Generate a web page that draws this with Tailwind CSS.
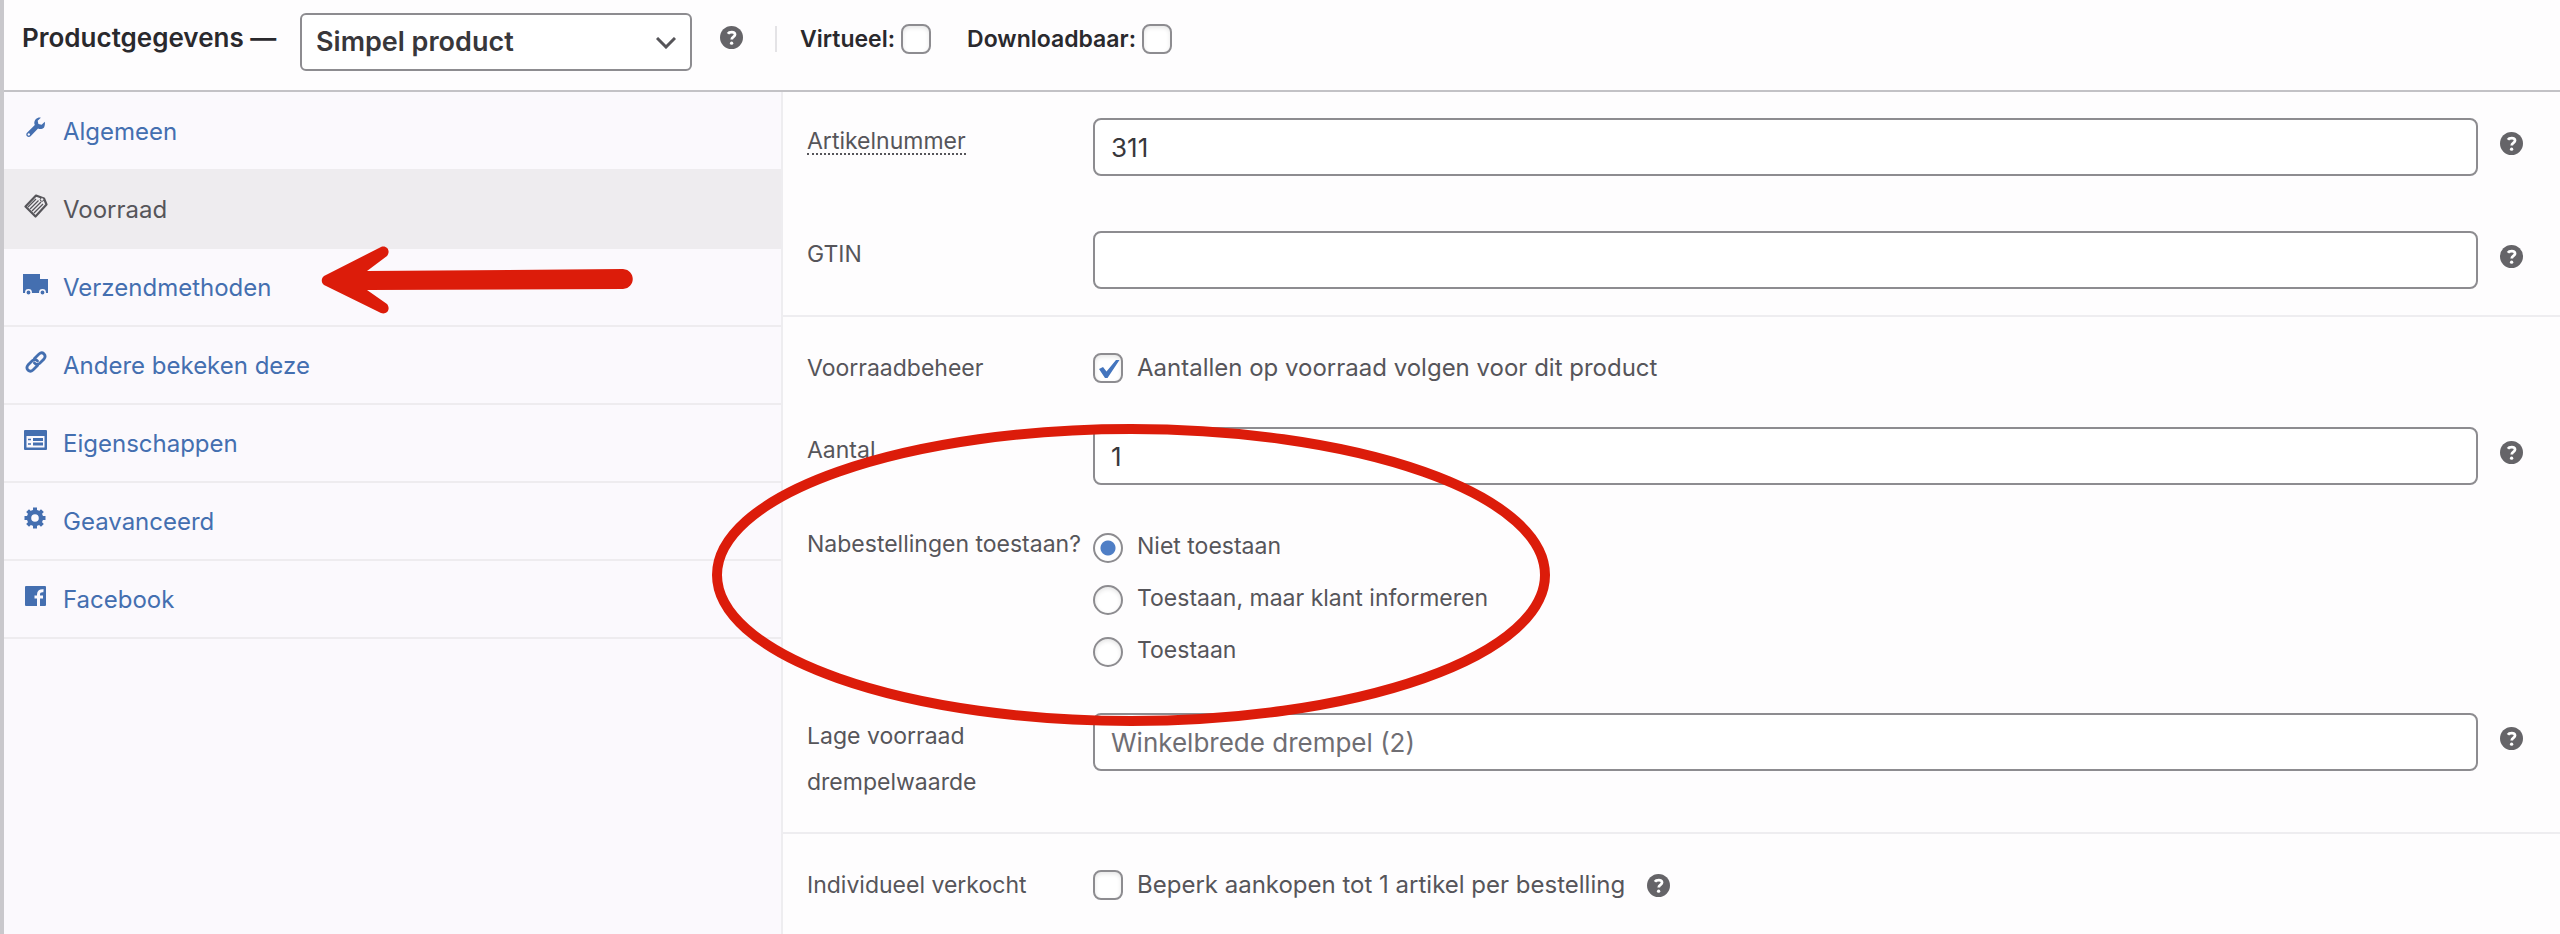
<!DOCTYPE html>
<html lang="nl">

<head>
    <meta charset="UTF-8">
    <title>Productgegevens</title>
    <script src="https://cdn.jsdelivr.net/npm/@tailwindcss/browser@4"></script>
</head>

<body class="bg-[#fefdfe] font-['Inter','Liberation_Sans',sans-serif] text-[#56555a]">
    <svg class="hidden">
        <symbol id="help" viewBox="0 0 22 22">
            <circle cx="11" cy="11" r="11" fill="#656468" />
            <path d="M7.6 7.4C8.6 5.6 14.4 4.8 14.4 8.2C14.4 10.6 11.2 10.4 11.2 13" fill="none" stroke="#fff" stroke-width="2.6" />
            <circle cx="11.1" cy="16.4" r="1.6" fill="#fff" />
        </symbol>
    </svg>

    <div class="relative min-h-screen flex flex-col border-l-4 border-[#c9c8cc] overflow-hidden">
        <header class="flex items-start h-[92px] border-b-2 border-[#c3c2c6] pl-[18px] text-[#2a292d] font-semibold">
            <label for="product-type" class="w-[278px] pt-5 text-[26px] leading-9">Productgegevens —</label>
            <div class="relative mt-[13px] w-[392px]">
                <select id="product-type" class="appearance-none w-full h-[58px] rounded-md border-2 border-[#8d8c90] bg-white pl-[14px] text-[27px] text-[#38373b]">
                    <option>Simpel product</option>
                </select>
                <svg class="absolute right-4 top-6 w-5 h-3 pointer-events-none" viewBox="0 0 20 12" fill="none" stroke="#555458" stroke-width="3"><path d="M1 1L10 10L19 1" /></svg>
            </div>
            <button type="button" aria-label="Help" class="ml-7 mt-[26px]"><svg class="size-[23px]"><use href="#help" /></svg></button>
            <div class="flex items-center ml-8 mt-[26px] h-[26px] border-l-2 border-[#e4e3e6] pl-[23px] text-[23px]">
                <label for="virtual">Virtueel:</label>
                <input id="virtual" type="checkbox" class="appearance-none ml-[6px] size-[30px] rounded-lg border-2 border-[#8d8c90] bg-white shadow-[inset_0_2px_4px_#0000001a]">
                <label for="downloadable" class="ml-9">Downloadbaar:</label>
                <input id="downloadable" type="checkbox" class="appearance-none ml-[6px] size-[30px] rounded-lg border-2 border-[#8d8c90] bg-white shadow-[inset_0_2px_4px_#0000001a]">
            </div>
        </header>

        <div class="flex grow">
            <nav class="relative w-[779px] shrink-0 bg-[#fbf9fd] border-r-2 border-[#eeedf0] pt-px text-2xl text-[#446fb0]">
                <a href="#" class="flex items-center h-[78px] border-b-2 border-[#eeecef] pt-[2px] pl-5 gap-[15px]">
                    <svg class="size-6 mb-2" viewBox="0 0 20 20" fill="currentColor"><path d="M16.7 9.5c-1.4 1.4-3.4 1.7-5 .9L5.500 16.900c-.8.8-2.200.8-3 0s-.8-2.200 0-3L9 7.600c-.8-1.600-.5-3.600.9-5c1.100-1.100 2.700-1.500 4.100-1.200l-2.600 2.600l.6 2.700l2.700.6l2.600-2.600c.4 1.500 0 3.600-.6 4.800zM4 16.400c.5 0 1-.5 1-1s-.5-1-1-1s-1 .5-1 1s.5 1 1 1z" /></svg>
                    Algemeen
                </a>
                <a href="#" class="flex items-center h-[78px] border-b-2 border-[#eeecef] bg-[#eeecef] pt-[2px] pl-5 gap-[15px] text-[#56555a]">
                    <svg class="size-6 mb-2" viewBox="0 0 24 24" fill="none" stroke="currentColor"><path d="M1.500 12.500L12 1.500L20 4.500L22.500 10.500L11.500 22.500Z" stroke-width="2.200" stroke-linejoin="round" /><path d="M4 13L12 5M6 15L14.500 6.500M8 17L17 8M10 19L19 10" stroke-width="1.300" /><circle cx="18" cy="5.500" r="1.800" fill="#eeecef" stroke-width="1" /></svg>
                    Voorraad
                </a>
                <a href="#" class="flex items-center h-[78px] border-b-2 border-[#eeecef] pt-[2px] pl-[19px] gap-[15px]">
                    <svg class="w-[25px] h-6 mb-2" viewBox="0 0 25 24"><path d="M0 2H17V7H25V21H0Z" fill="currentColor" /><g fill="currentColor" stroke="#fbf9fd" stroke-width="1.500"><circle cx="5.500" cy="20.500" r="2.700" /><circle cx="19.500" cy="20.500" r="2.700" /></g></svg>
                    Verzendmethoden
                </a>
                <a href="#" class="flex items-center h-[78px] border-b-2 border-[#eeecef] pt-[2px] pl-5 gap-[15px]">
                    <svg class="size-6 mb-2" viewBox="0 0 24 24" fill="none" stroke="currentColor" stroke-width="2.800" stroke-linecap="round"><path d="M10.500 8.500L15 4C18.500 1 23 5 20 9L15.500 13.500C13.500 15 11.500 14.500 10.500 13M13.500 15.500L9 20C5.500 23 1 19 4 15L8.500 10.500C10.500 9 12.500 9.500 13.500 11" /></svg>
                    Andere bekeken deze
                </a>
                <a href="#" class="flex items-center h-[78px] border-b-2 border-[#eeecef] pt-[2px] pl-5 gap-[15px]">
                    <svg class="size-6 mb-2" viewBox="0 0 24 24"><rect x="0" y="2" width="23" height="20" rx="1" fill="currentColor" /><rect x="2.500" y="8" width="18" height="11.500" fill="#fbf9fd" /><path d="M9 11.500H19M9 16H19" stroke="currentColor" stroke-width="3.200" /><path d="M4 11.500H7M4 16H7" stroke="currentColor" stroke-width="1.500" /></svg>
                    Eigenschappen
                </a>
                <a href="#" class="flex items-center h-[78px] border-b-2 border-[#eeecef] pt-[2px] pl-5 gap-[15px]">
                    <svg class="size-6 mb-2" viewBox="0 0 24 24" fill="none" stroke="currentColor"><circle cx="11" cy="12" r="6" stroke-width="4.400" /><path d="M11 1.500V5M11 19V22.500M.5 12H4M18 12H21.500M3.600 4.600L6 7M16 17L18.400 19.400M3.600 19.400L6 17M16 7L18.400 4.600" stroke-width="4" /></svg>
                    Geavanceerd
                </a>
                <a href="#" class="flex items-center h-[78px] border-b-2 border-[#eeecef] pt-[2px] pl-5 gap-[15px]">
                    <svg class="size-6 mb-2" viewBox="0 0 24 24"><rect x="1" y="2" width="21" height="20" rx="1" fill="currentColor" /><path d="M14.500 22V10.500C14.500 7.500 16 6.500 19.500 6.800M10.500 13H19" fill="none" stroke="#fbf9fd" stroke-width="3" /></svg>
                    Facebook
                </a>

                <!-- arrow pointing at the tabs -->
                <svg class="absolute left-[316px] top-[152px] w-[320px] h-[72px] pointer-events-none" viewBox="0 0 320 72" fill="#dc1c0a"><path d="M4 32L61 3C67 1 71 7 67 12L47 27L303 25C316 26 316 44 303 45L47 46L67 60C71 65 67 71 61 69L4 41C1 39 1 34 4 32Z" /></svg>
            </nav>

            <main class="grow text-[23px] leading-[46px]">
                <section class="border-b-2 border-[#eeedf0] h-[225px] pt-[26px] pl-6 pr-[37px]">
                    <div class="flex items-start mb-[55px]">
                        <label for="sku" class="w-[286px] shrink-0 mt-[5px] leading-9"><abbr class="no-underline border-b-2 border-dotted border-[#56555a] leading-6 inline-block">Artikelnummer</abbr></label>
                        <input id="sku" type="text" value="311" class="grow h-[58px] rounded-lg border-2 border-[#8d8c90] bg-white px-4 text-[26px] text-[#38373b]">
                        <button type="button" aria-label="Help" class="ml-[22px] mt-[14px]"><svg class="size-[23px]"><use href="#help" /></svg></button>
                    </div>
                    <div class="flex items-start">
                        <label for="gtin" class="w-[286px] shrink-0">GTIN</label>
                        <input id="gtin" type="text" class="grow h-[58px] rounded-lg border-2 border-[#8d8c90] bg-white px-4 text-[26px] text-[#38373b]">
                        <button type="button" aria-label="Help" class="ml-[22px] mt-[14px]"><svg class="size-[23px]"><use href="#help" /></svg></button>
                    </div>
                </section>

                <section class="border-b-2 border-[#eeedf0] h-[517px] pt-7 pl-6 pr-[37px]">
                    <div class="flex items-center h-[46px] mb-9">
                        <span class="w-[286px] shrink-0">Voorraadbeheer</span>
                        <div class="relative size-[30px]">
                            <input id="manage-stock" type="checkbox" checked class="block appearance-none size-[30px] rounded-lg border-2 border-[#8d8c90] bg-white shadow-[inset_0_2px_4px_#0000001a]">
                            <svg class="absolute inset-0 pointer-events-none" viewBox="0 0 30 30" fill="#4375be"><path d="M6 16L10 14L13.500 18.500L23 7L26.500 7L14.500 25H12Z" /></svg>
                        </div>
                        <label for="manage-stock" class="ml-[14px] text-2xl">Aantallen op voorraad volgen voor dit product</label>
                    </div>
                    <div class="flex items-start mb-9">
                        <label for="stock" class="w-[286px] shrink-0">Aantal</label>
                        <input id="stock" type="text" value="1" class="grow h-[58px] rounded-lg border-2 border-[#8d8c90] bg-white px-4 text-[26px] text-[#38373b]">
                        <button type="button" aria-label="Help" class="ml-[22px] mt-[14px]"><svg class="size-[23px]"><use href="#help" /></svg></button>
                    </div>
                    <fieldset class="flex items-start mb-10">
                        <legend class="float-left w-[286px] shrink-0">Nabestellingen toestaan?</legend>
                        <div class="grid gap-[6px] pt-[2px]">
                            <label class="flex items-center gap-[14px]"><input type="radio" name="backorders" checked class="appearance-none mt-1 size-[30px] rounded-full border-2 border-[#8d8c90] bg-[radial-gradient(circle,#4f7fc6_7px,#ffffff_8px)]">Niet toestaan</label>
                            <label class="flex items-center gap-[14px]"><input type="radio" name="backorders" class="appearance-none mt-1 size-[30px] rounded-full border-2 border-[#8d8c90] bg-white shadow-[inset_0_2px_4px_#0000001a]">Toestaan, maar klant informeren</label>
                            <label class="flex items-center gap-[14px]"><input type="radio" name="backorders" class="appearance-none mt-1 size-[30px] rounded-full border-2 border-[#8d8c90] bg-white shadow-[inset_0_2px_4px_#0000001a]">Toestaan</label>
                        </div>
                    </fieldset>
                    <div class="flex items-start">
                        <label for="low-stock" class="w-[286px] shrink-0 pr-20">Lage voorraad drempelwaarde</label>
                        <input id="low-stock" type="text" placeholder="Winkelbrede drempel (2)" class="grow h-[58px] rounded-lg border-2 border-[#8d8c90] bg-white px-4 text-[26px] placeholder:text-[#6f6e73]">
                        <button type="button" aria-label="Help" class="ml-[22px] mt-[14px]"><svg class="size-[23px]"><use href="#help" /></svg></button>
                    </div>
                </section>

                <section class="flex items-center pt-7 pl-6">
                    <span class="w-[286px] shrink-0">Individueel verkocht</span>
                    <input id="sold-individually" type="checkbox" class="appearance-none size-[30px] rounded-lg border-2 border-[#8d8c90] bg-white shadow-[inset_0_2px_4px_#0000001a]">
                    <label for="sold-individually" class="ml-[14px] text-2xl">Beperk aankopen tot 1 artikel per bestelling</label>
                    <button type="button" aria-label="Help" class="ml-[22px]"><svg class="size-[23px]"><use href="#help" /></svg></button>
                </section>
            </main>
        </div>

        <!-- circle around the backorder options -->
        <svg class="absolute left-[708px] top-[424px] w-[838px] h-[302px] pointer-events-none" viewBox="0 0 838 302" fill="none" stroke="#dc1c0a" stroke-width="10"><ellipse cx="419" cy="151" rx="414" ry="146" /></svg>
    </div>
</body>

</html>
